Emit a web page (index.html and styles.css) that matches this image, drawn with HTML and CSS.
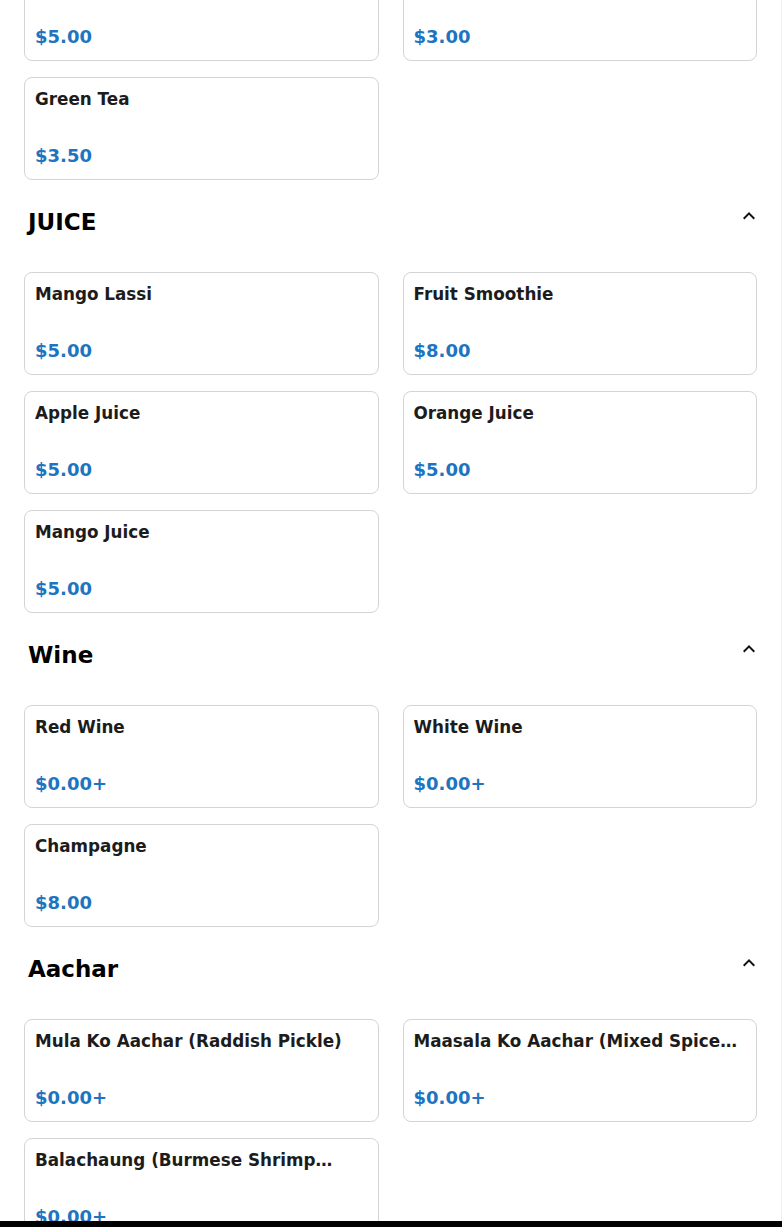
FILE: index.html
```html
<!DOCTYPE html>
<html lang="en">
<head>
<meta charset="utf-8">
<title>Menu</title>
<link rel="stylesheet" href="styles.css">
</head>
<body>
<main class="menu">
  <section class="section section-first">
    <div class="grid">
      <div class="card"><div class="name">Masala Chai</div><div class="price">$5.00</div></div>
      <div class="card"><div class="name">Black Tea</div><div class="price">$3.00</div></div>
      <div class="card"><div class="name">Green Tea</div><div class="price">$3.50</div></div>
    </div>
  </section>

  <section class="section">
    <header class="section-head">
      <h2 class="section-title">JUICE</h2>
      <span class="toggle"><svg viewBox="0 0 24 24" width="24" height="24"><path d="M12 8l-6 6 1.41 1.41L12 10.83l4.59 4.58L18 14z"/></svg></span>
    </header>
    <div class="grid">
      <div class="card"><div class="name">Mango Lassi</div><div class="price">$5.00</div></div>
      <div class="card"><div class="name">Fruit Smoothie</div><div class="price">$8.00</div></div>
      <div class="card"><div class="name">Apple Juice</div><div class="price">$5.00</div></div>
      <div class="card"><div class="name">Orange Juice</div><div class="price">$5.00</div></div>
      <div class="card"><div class="name">Mango Juice</div><div class="price">$5.00</div></div>
    </div>
  </section>

  <section class="section">
    <header class="section-head">
      <h2 class="section-title">Wine</h2>
      <span class="toggle"><svg viewBox="0 0 24 24" width="24" height="24"><path d="M12 8l-6 6 1.41 1.41L12 10.83l4.59 4.58L18 14z"/></svg></span>
    </header>
    <div class="grid">
      <div class="card"><div class="name">Red Wine</div><div class="price">$0.00+</div></div>
      <div class="card"><div class="name">White Wine</div><div class="price">$0.00+</div></div>
      <div class="card"><div class="name">Champagne</div><div class="price">$8.00</div></div>
    </div>
  </section>

  <section class="section">
    <header class="section-head">
      <h2 class="section-title">Aachar</h2>
      <span class="toggle"><svg viewBox="0 0 24 24" width="24" height="24"><path d="M12 8l-6 6 1.41 1.41L12 10.83l4.59 4.58L18 14z"/></svg></span>
    </header>
    <div class="grid">
      <div class="card"><div class="name">Mula Ko Aachar (Raddish Pickle)</div><div class="price">$0.00+</div></div>
      <div class="card"><div class="name">Maasala Ko Aachar (Mixed Spice Pickle)</div><div class="price">$0.00+</div></div>
      <div class="card"><div class="name">Balachaung (Burmese Shrimp Relish)</div><div class="price">$0.00+</div></div>
    </div>
  </section>
</main>
<div class="bottom-bar"></div>
</body>
</html>
```

FILE: styles.css
```css
html, body {
  margin: 0;
  padding: 0;
  background: #ffffff;
}

body {
  font-family: "DejaVu Sans", Verdana, sans-serif;
  color: #1a1a1a;
  border-right: 1px solid #f0f0f0;
  box-sizing: border-box;
  min-height: 100vh;
  overflow: hidden;
}

.menu {
  padding: 0 24px 40px;
}

.section-first {
  margin-top: -42px;
}

.section-head {
  display: flex;
  justify-content: space-between;
  align-items: flex-start;
  padding-top: 24px;
}

.section-title {
  margin: 4.7px 0 0 4px;
  font-size: 23px;
  line-height: normal;
  font-weight: bold;
  color: #000;
}

.toggle {
  display: block;
  width: 24px;
  height: 24px;
  margin-right: -4px;
}

.toggle svg {
  display: block;
  fill: #111;
}

.grid {
  display: grid;
  grid-template-columns: 1fr 1fr;
  column-gap: 24px;
  row-gap: 16px;
  margin-top: 37.4px;
}

.section-first .grid {
  margin-top: 0;
}

.card {
  box-sizing: border-box;
  height: 103px;
  border: 1px solid #d4d4d4;
  border-radius: 8px;
  padding: 11px 10px 13px;
  display: flex;
  flex-direction: column;
  min-width: 0;
  background: #fff;
}

.name {
  font-size: 16.8px;
  font-weight: bold;
  line-height: normal;
  display: -webkit-box;
  -webkit-box-orient: vertical;
  -webkit-line-clamp: 1;
  overflow: hidden;
  color: #1c1c1c;
}

.price {
  margin-top: auto;
  font-size: 18px;
  font-weight: bold;
  line-height: normal;
  color: #1d74c0;
}

.bottom-bar {
  position: fixed;
  left: 0;
  right: 0;
  bottom: 0;
  height: 6px;
  background: #000;
}
```
